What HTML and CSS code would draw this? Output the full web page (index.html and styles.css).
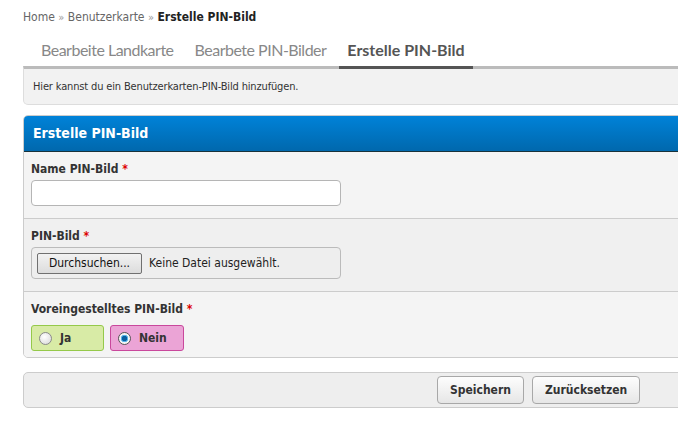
FILE: index.html
```html
<!DOCTYPE html>
<html lang="de">
<head>
<meta charset="utf-8">
<title>Erstelle PIN-Bild</title>
<link rel="stylesheet" href="styles.css">
</head>
<body>
<div class="page">
  <div class="crumbs"><a class="crumb">Home</a> <span class="sep">»</span> <a class="crumb">Benutzerkarte</a> <span class="sep">»</span> <strong class="current">Erstelle PIN-Bild</strong></div>
  <nav class="tabs">
    <a class="tab">Bearbeite Landkarte</a>
    <a class="tab">Bearbete PIN-Bilder</a>
    <a class="tab active">Erstelle PIN-Bild</a>
  </nav>
  <div class="info">Hier kannst du ein Benutzerkarten-PIN-Bild hinzufügen.</div>
  <form class="panel">
    <div class="panel-head">Erstelle PIN-Bild</div>
    <div class="row">
      <label class="lbl">Name PIN-Bild <span class="req">*</span></label>
      <div class="input"></div>
    </div>
    <div class="row alt">
      <label class="lbl">PIN-Bild <span class="req">*</span></label>
      <div class="filebox"><span class="browse">Durchsuchen...</span><span class="nofile">Keine Datei ausgewählt.</span></div>
    </div>
    <div class="row last">
      <label class="lbl">Voreingestelltes PIN-Bild <span class="req">*</span></label>
      <div class="radios">
        <span class="opt yes"><span class="radio"></span>Ja</span>
        <span class="opt no"><span class="radio checked"></span>Nein</span>
      </div>
    </div>
  </form>
  <div class="actions">
    <span class="btn">Speichern</span>
    <span class="btn">Zurücksetzen</span>
  </div>
</div>
</body>
</html>
```
FILE: styles.css
```css
html, body {
  margin: 0;
  padding: 0;
  background: #fff;
  overflow: hidden;
}
.page {
  width: 700px;
  padding: 10px 0 0 23px;
  font-family: "DejaVu Sans Condensed", "DejaVu Sans", sans-serif;
  font-size: 12px;
  color: #222;
}
.crumbs {
  font-size: 12px;
  line-height: 14px;
  color: #666;
  height: 14px;
}
.crumb { color: #666; }
.sep { color: #999; font-size: 11px; }
.current { color: #222; }
.tabs {
  display: flex;
  gap: 5px;
  padding-left: 10px;
  margin-top: 11px;
  height: 31px;
  align-items: flex-end;
}
.tab {
  font-family: Lato, sans-serif;
  font-size: 16px;
  line-height: 20px;
  letter-spacing: -0.5px;
  padding: 0 8px 6px;
  color: #888;
  border-bottom: 3px solid transparent;
  margin-bottom: -3px;
  position: relative;
  z-index: 1;
}
.tab.active {
  color: #555;
  font-weight: bold;
  letter-spacing: 0;
  border-bottom-color: #555;
}
.info {
  background: #f2f2f2;
  border: 1px solid #ddd;
  border-top: 3px solid #bbb;
  border-bottom-left-radius: 5px;
  padding: 11px 9px 10px;
  font-size: 11px;
  line-height: 14px;
  letter-spacing: -0.15px;
  color: #333;
}
.panel {
  display: block;
  margin: 10px 0 0;
  border: 1px solid #ccc;
  border-radius: 5px 0 0 5px;
  background: #f4f4f4;
  overflow: hidden;
}
.panel-head {
  height: 35px;
  line-height: 35px;
  padding-left: 9px;
  background: linear-gradient(#0082d8, #0068ad);
  border-bottom: 1px solid #18323a;
  color: #fff;
  font-weight: bold;
  font-size: 14px;
}
.row {
  padding: 8px 0 12px 7px;
  border-bottom: 1px solid #ccc;
  background: #f4f4f4;
}
.row.alt { background: #f0f0f0; }
.row.last { border-bottom: 0; padding-bottom: 6px; }
.lbl {
  display: block;
  font-weight: bold;
  line-height: 16px;
  padding-top: 1px;
  color: #333;
  margin-bottom: 3px;
}
.req { color: #d00; }
.input {
  box-sizing: border-box;
  width: 310px;
  height: 26px;
  background: #fff;
  border: 1px solid #b5b5b5;
  border-radius: 4px;
}
.filebox {
  box-sizing: border-box;
  width: 310px;
  height: 32px;
  padding: 0 0 0 5px;
  display: flex;
  align-items: center;
  gap: 7px;
  background: #eee;
  border: 1px solid #bbb;
  border-radius: 4px;
}
.browse {
  height: 19px;
  line-height: 19px;
  width: 103px;
  text-align: center;
  border: 1px solid #707070;
  border-radius: 2px;
  background: linear-gradient(#f2f2f2, #dcdcdc);
  color: #111;
}
.nofile { color: #222; }
.radios {
  display: flex;
  gap: 6px;
  padding-top: 5px;
}
.opt {
  box-sizing: border-box;
  height: 26px;
  display: flex;
  align-items: center;
  gap: 8px;
  padding-left: 7px;
  border: 1px solid;
  border-radius: 3px;
  font-weight: bold;
  color: #333;
}
.opt.yes { width: 73px; background: #d8eba6; border-color: #95c94a; }
.opt.no { width: 74px; background: #eba4d6; border-color: #c9489c; }
.radio {
  width: 11px;
  height: 11px;
  border-radius: 50%;
  border: 1px solid #8a8a8a;
  background: radial-gradient(circle at 40% 35%, #fff, #d6d6d6);
}
.radio.checked {
  border-color: #555;
  background: radial-gradient(circle, #0a5fa0 0 2.5px, #56b4ea 3px 3.5px, #f4f4f4 4px);
}
.actions {
  margin-top: 14px;
  height: 34px;
  border: 1px solid #ccc;
  border-radius: 5px 0 0 5px;
  background: #eee;
  display: flex;
  align-items: center;
  gap: 8px;
  padding-left: 413px;
}
.btn {
  box-sizing: border-box;
  height: 28px;
  line-height: 26px;
  padding: 0 12px;
  border: 1px solid #a8a8a8;
  border-radius: 4px;
  background: linear-gradient(#fdfdfd, #e6e6e6);
  font-weight: bold;
  color: #333;
}
```
